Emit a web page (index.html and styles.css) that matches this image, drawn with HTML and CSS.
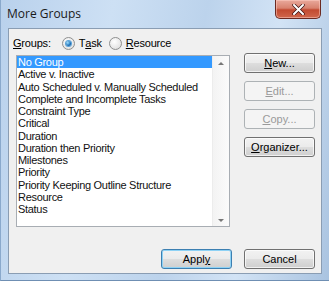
FILE: index.html
```html
<!DOCTYPE html>
<html lang="en">
<head>
  <meta charset="UTF-8">
  <title>More Groups</title>
  <link rel="stylesheet" href="styles.css">
</head>
<body>

  <div class="window">
    <div class="titlebar">
      <div class="title">More Groups</div>
      <div class="close-btn">
        <svg width="13" height="11" viewBox="0 0 13 11">
          <path d="M2 1 L11 10 M11 1 L2 10" stroke="#3a1010" stroke-width="3.4" stroke-linecap="round"/>
          <path d="M2 1 L11 10 M11 1 L2 10" stroke="#fff" stroke-width="2" stroke-linecap="round"/>
        </svg>
      </div>
    </div>

    <div class="client">
      <div class="groups-row">
        <span class="label"><u>G</u>roups:</span>
        <label class="radio"><span class="dot checked"></span>T<u>a</u>sk</label>
        <label class="radio"><span class="dot"></span><u>R</u>esource</label>
      </div>

      <div class="main">
        <div class="listbox">
          <ul class="items">
            <li class="selected">No Group</li>
            <li>Active v. Inactive</li>
            <li>Auto Scheduled v. Manually Scheduled</li>
            <li>Complete and Incomplete Tasks</li>
            <li>Constraint Type</li>
            <li>Critical</li>
            <li>Duration</li>
            <li>Duration then Priority</li>
            <li>Milestones</li>
            <li>Priority</li>
            <li>Priority Keeping Outline Structure</li>
            <li>Resource</li>
            <li>Status</li>
          </ul>
          <div class="scrollbar">
            <span class="arrow up"></span>
            <span class="arrow down"></span>
          </div>
        </div>

        <div class="side-buttons">
          <button class="btn"><u>N</u>ew...</button>
          <button class="btn" disabled><u>E</u>dit...</button>
          <button class="btn" disabled><u>C</u>opy...</button>
          <button class="btn"><u>O</u>rganizer...</button>
        </div>
      </div>

      <div class="footer">
        <button class="btn default">Appl<u>y</u></button>
        <button class="btn">Cancel</button>
      </div>
    </div>
  </div>

</body>
</html>
```

FILE: styles.css
```css
body {
  margin: 0;
  padding: 0;
  background: #fff;
  font-family: 'Liberation Sans', Arial, sans-serif;
  font-size: 11px;
  color: #000;
}

.window {
  width: 329px;
  height: 281px;
  box-sizing: border-box;
  padding: 0 7px 6px 7px;
  display: flex;
  flex-direction: column;
  background: linear-gradient(100deg, #b9d1ec 0%, #cde0f4 30%, #bcd3ec 55%, #d2e3f5 75%, #a9c3e0 100%);
  border-left: 1px solid #8aa9cc;
  border-bottom: 1px solid #6f8fb3;
}

.titlebar {
  height: 28px;
  display: flex;
  justify-content: space-between;
  align-items: flex-start;
  flex-shrink: 0;
}

.title {
  font-family: 'Open Sans', 'Noto Sans', sans-serif;
  font-size: 12px;
  color: #1a1a1a;
  margin-top: 5px;
  margin-left: -1px;
}

.close-btn {
  width: 44px;
  height: 18px;
  margin-right: 1px;
  border: 1px solid #6b2a22;
  border-top: none;
  border-radius: 0 0 5px 5px;
  background: linear-gradient(#e9a99c 0%, #d8826f 45%, #c24a31 55%, #d0674c 100%);
  display: flex;
  align-items: center;
  justify-content: center;
  box-shadow: inset 0 0 0 1px rgba(255, 210, 200, 0.5);
}

.client {
  flex: 1;
  background: #f0f0f0;
  border: 1px solid #8a9db3;
  padding: 0 6px 0 4px;
  display: flex;
  flex-direction: column;
}

.groups-row {
  display: flex;
  align-items: center;
  height: 26px;
  padding-top: 2px;
  box-sizing: border-box;
  letter-spacing: -0.2px;
}

.label {
  margin-right: 11px;
}

.radio {
  display: flex;
  align-items: center;
  margin-right: 7px;
}

.dot {
  width: 11px;
  height: 11px;
  border-radius: 50%;
  border: 1px solid #8e8f8f;
  background: radial-gradient(circle at 40% 35%, #ffffff 0%, #e4e4e4 70%, #cfcfcf 100%);
  margin-right: 4px;
  display: flex;
  align-items: center;
  justify-content: center;
}

.dot.checked::after {
  content: "";
  width: 5px;
  height: 5px;
  border-radius: 50%;
  background: radial-gradient(circle at 35% 35%, #9fe0ff 0%, #1a6fb8 60%, #0c3f7a 100%);
  box-shadow: 0 0 0 1px #5aa2d8;
}

.main {
  display: flex;
  justify-content: space-between;
  align-items: flex-start;
  height: 187px;
}

.listbox {
  width: 214px;
  height: 172px;
  margin-left: 3px;
  box-sizing: border-box;
  border: 1px solid #a8adb3;
  background: #fff;
  display: flex;
}

.items {
  list-style: none;
  margin: 0;
  padding: 0;
  flex: 1;
}

.items li {
  height: 12.25px;
  line-height: 12px;
  padding-left: 1px;
  white-space: nowrap;
  color: #111;
  letter-spacing: -0.3px;
}

.items li.selected {
  background: #3399ff;
  color: #fff;
}

.scrollbar {
  width: 16px;
  border-left: 1px solid #ececec;
  background: linear-gradient(90deg, #f3f3f3, #fbfbfb);
  display: flex;
  flex-direction: column;
  justify-content: space-between;
  align-items: center;
  padding: 6px 0 4px;
}

.arrow {
  width: 0;
  height: 0;
  border-left: 3px solid transparent;
  border-right: 3px solid transparent;
}

.arrow.up {
  border-bottom: 3px solid #777;
}

.arrow.down {
  border-top: 3px solid #777;
}

.side-buttons {
  display: flex;
  flex-direction: column;
  gap: 8px;
  margin-top: -2px;
}

.btn {
  width: 71px;
  height: 20px;
  padding: 0;
  font-family: 'Liberation Sans', Arial, sans-serif;
  font-size: 11px;
  color: #000;
  border: 1px solid #707070;
  border-radius: 3px;
  background: linear-gradient(#f2f2f2 0%, #ebebeb 48%, #dddddd 52%, #cfcfcf 100%);
  box-shadow: inset 0 0 0 1px rgba(255, 255, 255, 0.7);
}

.btn:disabled {
  border-color: #adb2b5;
  background: #f4f4f4;
  color: #9a9a9a;
  box-shadow: none;
}

.btn.default {
  border-color: #3c7fb1;
  box-shadow: inset 0 0 0 1px #8ed2f5;
}

.footer {
  display: flex;
  justify-content: flex-end;
  gap: 12px;
  margin-top: 7px;
}
```
